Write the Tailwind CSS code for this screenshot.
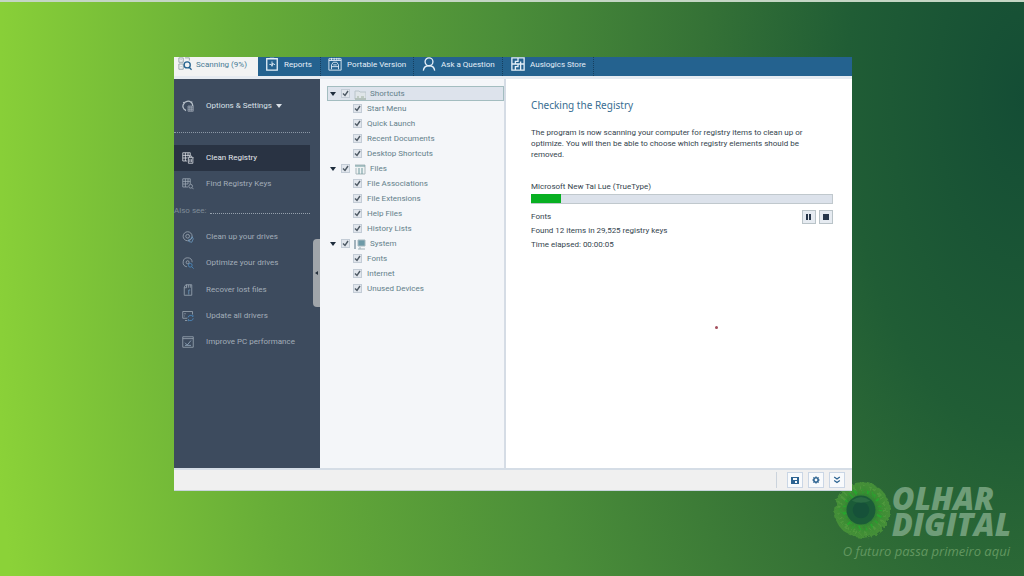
<!DOCTYPE html>
<html lang="en">
<head>
<meta charset="utf-8">
<meta name="viewport" content="width=device-width, initial-scale=1">
<title>Registry Cleaner</title>
<script src="https://cdn.jsdelivr.net/npm/@tailwindcss/browser@4"></script>
</head>
<body class="relative min-h-screen overflow-x-hidden border-t-2 border-[#c4d6c4] bg-[radial-gradient(ellipse_102%_340%_at_100%_17%,#144d35_0%,#205d35_17%,#357236_31%,#4b8e39_50%,#67ad38_75%,#8bd238_100%)] font-['Roboto','Noto_Sans',sans-serif] text-[8px] leading-3">

<svg class="hidden">
  <symbol id="i-scan" viewBox="0 0 16 16"><path d="M1 1h5v5H1zM8 1h5v3M1 8h5v6H1zM3 3h1M3 11h1"/><circle cx="10.500" cy="9" r="3.500" stroke="#24628f" stroke-width="1.500"/><path d="m13 12 2.500 2.500" stroke="#24628f" stroke-width="1.500"/></symbol>
  <symbol id="i-report" viewBox="0 0 16 16"><path d="M2 2h12v13H2zM5.500 1.500h5" stroke-width="1.500"/><path d="M8 5v6M5 8.500h2l1 1.500 1-3 1 1.500h1.500"/></symbol>
  <symbol id="i-portable" viewBox="0 0 16 16"><path d="M1 15V2h14v13zM1 4h14M4 1v3M7 1v3M10 1v3M12.500 1v3M4 14V9l2-3h4l2 3v5M4 11h8M6 9h4"/></symbol>
  <symbol id="i-person" viewBox="0 0 16 16"><circle cx="8" cy="5.500" r="4.500"/><path d="M1.500 15.500c.5-4 3-5.500 6.500-5.500s6 1.500 6.500 5.500"/></symbol>
  <symbol id="i-store" viewBox="0 0 16 16"><path d="M1 1h14v14H1zM8 1v4H5v3M1 8h7v3H5v4M15 8h-4V5M8 8h3v3M11 11v4"/></symbol>
  <symbol id="i-gear" viewBox="0 0 16 16"><path d="M5 13.500C1 12 .5 8 2 5.500 4 1.500 9 .5 12 3c1.500 1.200 2.500 3 2.300 5M3 4 1.500 3M5 13l-1 1.500M12.500 3.500l1-1.500" stroke-width="1.700"/><path d="M8 8h7v7H8zM8 10.500h7M8 13h7M10.500 8v7M13 8v7" stroke-width=".8"/></symbol>
  <symbol id="i-clean" viewBox="0 0 16 16"><path d="M7 12H1V1h10v4M1 4.500h10M1 8h6M4.500 1v11M8 1v5"/><path d="M7.500 7.500h8M10 7V5.500h3V7M8.500 8v7h6V8M10.500 9.500v4M12.500 9.500v4"/></symbol>
  <symbol id="i-find" viewBox="0 0 16 16"><path d="M8 12H1V1h10v7M1 4.500h10M1 8h7M4.500 1v11M8 1v7"/><circle cx="11.500" cy="11" r="2.500"/><path d="m13.500 13 2 2"/></symbol>
  <symbol id="i-disc" viewBox="0 0 16 16"><circle cx="7.500" cy="7" r="6"/><circle cx="7.500" cy="7" r="2.500"/><path d="M9 11.500c2 0 4-1 4.500-4l1.500 3-2 4.500-4-1z" stroke="#6f9dc4"/></symbol>
  <symbol id="i-discfind" viewBox="0 0 16 16"><path d="M6.500 13a6 6 0 1 1 7-6"/><circle cx="7.500" cy="7" r="2"/><circle cx="11" cy="11" r="2.500" stroke="#4d92cb"/><path d="m13 13 2.500 2.500" stroke="#4d92cb"/></symbol>
  <symbol id="i-file" viewBox="0 0 16 16"><path d="M3 14V4l2-3h8v14H3zM3 5h3M6 1v4M8.500 1v4M11 1v4"/><path d="M9 14V8h2" stroke="#6f9dc4"/></symbol>
  <symbol id="i-driver" viewBox="0 0 16 16"><path d="M7 11H1V2h13v4M4 14h3M3 5h2M3 8h1"/><path d="M8 10a3.500 3.500 0 0 1 6.500-1V6.500M15 11a3.500 3.500 0 0 1-6.500 1.500V15" stroke="#4d92cb"/></symbol>
  <symbol id="i-perf" viewBox="0 0 16 16"><path d="M1 1h14v14H1zM1 3.500h14"/><path d="m4 9 3 3 5-6M4 12.500h8" stroke="#9db3c8"/></symbol>
</svg>

<main class="relative z-10 pt-[55px] pr-[16.8%] pl-[17%]">
  <div class="border-b border-[#c9d4dc] bg-white">
    <nav class="flex h-[19px] overflow-hidden bg-[#24628f] text-[#e4eff8]">
      <a href="#" class="flex w-[84px] shrink-0 items-start gap-1 bg-[#f2f3f3] pl-1 text-[#477a93]"><svg class="size-[14px] shrink-0 fill-none stroke-[#8f9fa8]"><use href="#i-scan"/></svg><span class="pt-[2px]">Scanning (9%)</span></a>
      <a href="#" class="flex w-[63px] shrink-0 items-start gap-[5px] border-r border-dotted border-[#163f5f] pl-[7px]"><svg class="size-[14px] shrink-0 fill-none stroke-current"><use href="#i-report"/></svg><span class="pt-[2px]">Reports</span></a>
      <a href="#" class="flex w-[93px] shrink-0 items-start gap-[5px] border-r border-dotted border-[#163f5f] pl-[7px]"><svg class="size-[14px] shrink-0 fill-none stroke-current"><use href="#i-portable"/></svg><span class="whitespace-nowrap pt-[2px]">Portable Version</span></a>
      <a href="#" class="flex w-[89px] shrink-0 items-start gap-[5px] border-r border-dotted border-[#163f5f] pl-2"><svg class="size-[14px] shrink-0 fill-none stroke-current stroke-[1.5]"><use href="#i-person"/></svg><span class="whitespace-nowrap pt-[2px]">Ask a Question</span></a>
      <a href="#" class="flex w-[91px] shrink-0 items-start gap-[5px] border-r border-dotted border-[#163f5f] pl-2"><svg class="size-[14px] shrink-0 fill-none stroke-current stroke-[1.5]"><use href="#i-store"/></svg><span class="whitespace-nowrap pt-[2px]">Auslogics Store</span></a>
    </nav>
    <div class="h-[3px] bg-[#e6ebf1]"></div>

    <div class="flex min-h-[389px]">
      <aside class="relative w-[146px] shrink-0 bg-[#3d4b5e] pr-[10px] text-[#a3adb9]">
        <button class="flex h-[53px] w-full items-center gap-3 pl-2 text-[#dbe1e8]"><svg class="size-3 shrink-0 fill-none stroke-[#b7c0ca]"><use href="#i-gear"/></svg><span>Options &amp; Settings</span><span class="-ml-2 border-x-[3px] border-t-[4px] border-x-transparent border-t-current"></span></button>
        <div class="mb-3 border-t border-dotted border-[#8c98a6]"></div>
        <a href="#" class="flex h-[26px] items-center gap-3 bg-[#293343] pl-2 text-[#e4e8ed]"><svg class="size-3 shrink-0 fill-none stroke-current"><use href="#i-clean"/></svg>Clean Registry</a>
        <a href="#" class="flex h-[26px] items-center gap-3 pl-2"><svg class="size-3 shrink-0 fill-none stroke-current"><use href="#i-find"/></svg>Find Registry Keys</a>
        <div class="flex h-[27px] items-center gap-1 pt-[1px] text-[#7f8b99]">Also see:<span class="mt-1 flex-1 border-t border-dotted border-[#96a1ad]"></span></div>
        <a href="#" class="flex h-[26px] items-center gap-3 pl-2"><svg class="size-3 shrink-0 fill-none stroke-current"><use href="#i-disc"/></svg>Clean up your drives</a>
        <a href="#" class="flex h-[26px] items-center gap-3 pl-2"><svg class="size-3 shrink-0 fill-none stroke-current"><use href="#i-discfind"/></svg>Optimize your drives</a>
        <a href="#" class="flex h-[27px] items-center gap-3 pl-2"><svg class="size-3 shrink-0 fill-none stroke-current"><use href="#i-file"/></svg>Recover lost files</a>
        <a href="#" class="flex h-[26px] items-center gap-3 pl-2"><svg class="size-3 shrink-0 fill-none stroke-current"><use href="#i-driver"/></svg>Update all drivers</a>
        <a href="#" class="flex h-[26px] items-center gap-3 pl-2"><svg class="size-3 shrink-0 fill-none stroke-current"><use href="#i-perf"/></svg>Improve PC performance</a>
        <button aria-label="Collapse sidebar" class="absolute top-[160px] right-0 flex h-[68px] w-[7px] items-center justify-center rounded-l-sm bg-[#a0a5aa]"><span class="border-y-2 border-r-[3px] border-y-transparent border-r-[#26303c]"></span></button>
      </aside>

      <section id="tree" aria-label="Registry items" class="w-[186px] shrink-0 border-r-2 border-[#d5dce5] bg-[#f4f6f9] pt-[7px] pl-[7px] text-[#63808a]"></section>

      <section class="min-w-0 flex-1 bg-white pr-[19px] pl-[25px] text-[#34444e]">
        <h1 class="pt-[19px] font-['Noto_Sans'] text-[10px] leading-[14px] text-[#386d92]">Checking the Registry</h1>
        <p class="mt-[15px] max-w-[290px] leading-[11px]">The program is now scanning your computer for registry items to clean up or<br>optimize. You will then be able to choose which registry elements should be<br>removed.</p>
        <p class="mt-[21px]">Microsoft New Tai Lue (TrueType)</p>
        <div role="progressbar" aria-label="Scan progress" aria-valuenow="9" class="mt-[1px] h-[10px] border border-[#c0c8cd] bg-[#dce2eb]"><div class="-mt-px -ml-px h-[9px] bg-[#08b022]" style="width:10%"></div></div>
        <div class="mt-[6px] flex justify-between">
          <div class="leading-[14px]"><p>Fonts</p><p>Found 12 items in 29,525 registry keys</p><p>Time elapsed: 00:00:05</p></div>
          <div class="flex gap-[3px]">
            <button aria-label="Pause" class="flex size-[14px] items-center justify-center gap-[1px] border border-[#b9c3c8] bg-[#e6ebf1]"><span class="h-[6px] w-[2px] bg-[#27364a]"></span><span class="h-[6px] w-[2px] bg-[#27364a]"></span></button>
            <button aria-label="Stop" class="flex size-[14px] items-center justify-center border border-[#b9c3c8] bg-[#e6ebf1]"><span class="h-[6px] w-[6px] bg-[#27364a]"></span></button>
          </div>
        </div>
        <div class="mt-[74px] ml-[184px] size-[3px] rounded-full bg-[#a34e5c]"></div>
      </section>
    </div>

    <footer class="flex h-[22px] items-center justify-end gap-[5px] border-t-2 border-[#d5dde6] bg-[#f0f0f0] pr-[7px]">
      <span class="mr-[5px] h-4 border-l border-[#cbd3dc]"></span>
      <button aria-label="Save" class="flex size-4 items-center justify-center border border-[#cad6e5] bg-[#f8fafc]"><svg viewBox="0 0 8 8" class="size-2"><path fill="#2c6391" fill-rule="evenodd" d="M0 1h8v7H0zM2 2v2h4V2zM4 5v2h2V5z"/></svg></button>
      <button aria-label="Settings" class="flex size-4 items-center justify-center border border-[#cad6e5] bg-[#f8fafc]"><svg viewBox="0 0 8 8" class="size-2 fill-none stroke-[#2c6391]"><circle cx="4" cy="4" r="2.200" stroke-width="1.600"/><path d="M4 .3v1M4 6.700v1M.3 4h1M6.700 4h1M1.400 1.400l.7.7M5.900 5.900l.7.7M6.600 1.400l-.7.7M2.100 5.900l-.7.7"/></svg></button>
      <button aria-label="More" class="flex size-4 items-center justify-center border border-[#cad6e5] bg-[#f8fafc]"><svg viewBox="0 0 8 8" class="size-2 fill-none stroke-[#2c6391] stroke-[1.3]"><path d="m1.200 1 2.800 2 2.800-2M1.200 4.500l2.800 2 2.800-2"/></svg></button>
    </footer>
  </div>
</main>

<div class="absolute right-[13px] top-[476px] flex text-[#6f9d78]">
  <svg viewBox="0 0 60 60" class="size-[62px]">
    <defs>
      <radialGradient id="iris"><stop offset=".4" stop-color="#2b7c34"/><stop offset=".65" stop-color="#3a8c33"/><stop offset="1" stop-color="#468f38"/></radialGradient>
      <filter id="rough"><feTurbulence type="fractalNoise" baseFrequency=".25" numOctaves="2"/><feDisplacementMap in="SourceGraphic" scale="6"/></filter>
    </defs>
    <g filter="url(#rough)">
      <circle cx="31" cy="31" r="27" fill="url(#iris)"/>
      <circle cx="31" cy="31" r="22" fill="none" stroke="#5aa045" stroke-width="4" stroke-dasharray="2 3 1 4" opacity=".6"/>
      <circle cx="31" cy="31" r="18" fill="none" stroke="#22ab2c" stroke-width="4" stroke-dasharray="1 4 2 5" opacity=".8"/>
    </g>
    <circle cx="30" cy="31" r="14" fill="#1b5c38"/>
    <circle cx="30" cy="31" r="8" fill="#165139"/>
    <path d="M21 22q9-7 18 0-9 4-18 0" fill="#2a6b43"/>
  </svg>
  <div class="pt-[7px] font-['Open_Sans'] text-[31px] leading-[26px] font-extrabold italic"><div>OLHAR</div><div>DIGITAL</div></div>
</div>
<p class="absolute right-[14px] top-[541px] font-['Open_Sans'] text-[13px] leading-4 text-[#629760] italic">O futuro passa primeiro aqui</p>

<script>
const groups = [
  ['Shortcuts', ['Start Menu', 'Quick Launch', 'Recent Documents', 'Desktop Shortcuts'], '<path d="M1 3h4l1 1h6v7H1z" fill="#dfe5e8" stroke="#b9c4ca"/><path d="M1 11h11M3 9h2M7 9h3" stroke="#9fb09f"/>'],
  ['Files', ['File Associations', 'File Extensions', 'Help Files', 'History Lists'], '<path d="M1 2h10v9H2V5" fill="#eef2f3" stroke="#a9b8bc"/><path d="M1 3h10M5 5v6M8 5v6" stroke="#6f9a9f"/>'],
  ['System', ['Fonts', 'Internet', 'Unused Devices'], '<path d="M1 2v9" stroke="#a3b3bd" stroke-width="2"/><path d="M4 2h7v6H4z" fill="#6d9aa8" stroke="#a5b8bf"/><path d="M6 9v2M4 11h7" stroke="#9eb0b8"/>']
];
const box = `<span class="grid size-[9px] shrink-0"><input type="checkbox" checked class="peer col-start-1 row-start-1 size-[9px] appearance-none border border-[#c3ccd6] bg-[#e1e6ed]"><svg viewBox="0 0 9 9" class="pointer-events-none col-start-1 row-start-1 hidden size-[9px] fill-none stroke-[#4d5964] stroke-[1.4] peer-checked:block"><path d="m2 4.500 2 2 3-4.500"/></svg></span>`;
document.getElementById('tree').innerHTML = groups.map(([name, items, art], n) =>
  `<div class="flex h-[15px] items-center border ${n ? 'border-transparent' : 'border-[#a3bdc0] bg-[#dde3ec]'}"><button aria-label="Toggle ${name}" class="mr-[5px] ml-[2px] border-x-[3px] border-t-[4px] border-x-transparent border-t-[#1d2c3c]"></button><label class="flex items-center gap-1">${box}<svg viewBox="0 0 12 12" class="size-3 fill-none">${art}</svg><span>${name}</span></label></div>` +
  items.map(t => `<label class="flex h-[15px] items-center gap-[5px] pl-[26px]">${box}<span>${t}</span></label>`).join('')
).join('');
</script>
</body>
</html>
